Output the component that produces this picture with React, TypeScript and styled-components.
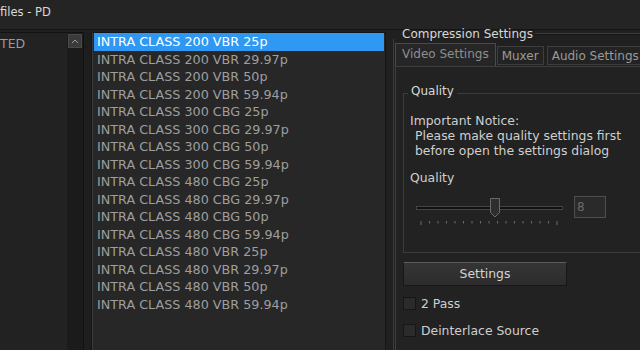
import React from "react";
import styled, { createGlobalStyle } from "styled-components";

const Global = createGlobalStyle`
  html, body { margin: 0; padding: 0; background: #1e1e1e; }
  body { width: 640px; height: 350px; overflow: hidden; font-family: "DejaVu Sans", sans-serif; }
  #root { width: 640px; height: 350px; }
`;

const Window = styled.div`
  width: 640px;
  height: 350px;
  display: flex;
  flex-direction: column;
  background: #202020;
  overflow: hidden;
`;

const TitleBar = styled.div`
  height: 29px;
  flex: none;
  background: #242424;
  border-bottom: 1px solid #151515;
  color: #d8d8d8;
  font-size: 11.5px;
  line-height: 25px;
  white-space: nowrap;
`;

const Body = styled.div`
  flex: 1;
  display: flex;
  padding-top: 2px;
  min-height: 0;
`;

const LeftList = styled.div`
  width: 83px;
  flex: none;
  display: flex;
  border-top: 1px solid #121212;
  border-right: 1px solid #121212;
  background: #222;
`;

const LeftItems = styled.div`
  flex: 1;
  color: #9a9a9a;
  font-size: 12.5px;
  line-height: 18px;
  padding-top: 2px;
  white-space: nowrap;
`;

const ScrollTrack = styled.div`
  width: 16px;
  flex: none;
  background: #1b1b1b;
  display: flex;
  flex-direction: column;
  align-items: center;
  padding-top: 1px;
`;

const ScrollBtn = styled.div`
  width: 14px;
  height: 14px;
  background: #3a3a3a;
  border: 1px solid #4a4a4a;
  box-sizing: border-box;
  display: flex;
  align-items: center;
  justify-content: center;
`;

const Spacer = styled.div`
  width: 7px;
  flex: none;
  background: #1e1e1e;
  border-right: 1px solid #151515;
`;

const PresetList = styled.div`
  width: 290px;
  flex: none;
  background: #272727;
  border-top: 1px solid #151515;
  border-right: 1px solid #151515;
  border-left: 1px solid #3a3a3a;
  padding: 0 1px 0 1px;
`;

const PresetItem = styled.div<{ $selected?: boolean }>`
  height: 17.5px;
  line-height: 17.5px;
  padding-left: 3px;
  font-size: 12.75px;
  white-space: nowrap;
  color: ${(p) => (p.$selected ? "#ffffff" : "#9e9e9e")};
  background: ${(p) => (p.$selected ? "#2f98f2" : "transparent")};
`;

const RightPane = styled.div`
  flex: 1;
  padding-left: 7px;
  display: flex;
  flex-direction: column;
  min-width: 0;
`;

const GroupTitleRow = styled.div`
  display: flex;
  align-items: center;
  height: 10px;
  margin-top: -3px;
`;

const GroupTitle = styled.span`
  color: #d8d8d8;
  font-size: 12px;
  padding: 0 2px 0 9px;
  white-space: nowrap;
`;

const GroupLine = styled.div`
  flex: 1;
  height: 0;
  border-top: 1px solid #3c3c3c;
  border-bottom: 1px solid #141414;
`;

const GroupBody = styled.div`
  flex: 1;
  border-left: 1px solid #3c3c3c;
  display: flex;
  flex-direction: column;
  padding-top: 4px;
  min-width: 0;
`;

const TabStrip = styled.div`
  display: flex;
  align-items: flex-end;
  height: 23px;
  padding-left: 1px;
  overflow: hidden;
`;

const Tab = styled.div<{ $active?: boolean }>`
  flex: none;
  height: ${(p) => (p.$active ? "23px" : "19px")};
  line-height: ${(p) => (p.$active ? "21px" : "18px")};
  padding: 0 ${(p) => (p.$active ? "6px" : "4px")};
  margin-right: ${(p) => (p.$active ? "1px" : "3px")};
  margin-bottom: ${(p) => (p.$active ? "0" : "1px")};
  box-sizing: border-box;
  font-size: 12px;
  color: ${(p) => (p.$active ? "#8e8e8e" : "#9a9a9a")};
  background: ${(p) => (p.$active ? "#262626" : "#232323")};
  border: 1px solid ${(p) => (p.$active ? "#4a4a4a" : "#3e3e3e")};
  border-bottom: ${(p) => (p.$active ? "none" : "1px solid #3e3e3e")};
  white-space: nowrap;
`;

const TabPanel = styled.div`
  flex: 1;
  border-top: 1px solid #3e3e3e;
  border-left: 1px solid #3e3e3e;
  margin-left: 1px;
  background: #222;
  padding: 26px 0 0 7px;
  display: flex;
  flex-direction: column;
`;

const QualityGroup = styled.div`
  border-top: 1px solid #3c3c3c;
  border-left: 1px solid #3c3c3c;
  border-bottom: 1px solid #3c3c3c;
  height: 160px;
  box-sizing: border-box;
  padding: 19px 0 0 6px;
  position: relative;
`;

const QualityLegend = styled.span`
  position: absolute;
  top: -10px;
  left: 4px;
  padding: 0 3px;
  background: #222;
  color: #d8d8d8;
  font-size: 12px;
`;

const Notice = styled.div`
  color: #cfcfcf;
  font-size: 12.4px;
  line-height: 15px;
  white-space: nowrap;
`;

const NoticeBody = styled.div`
  padding-left: 5px;
`;

const FieldLabel = styled.div`
  color: #cfcfcf;
  font-size: 12.4px;
  margin-top: 12px;
`;

const SliderRow = styled.div`
  display: flex;
  align-items: flex-start;
  margin-top: 12px;
`;

const SliderBox = styled.div`
  width: 152px;
  margin-left: 6px;
`;

const NumBox = styled.div`
  width: 32px;
  height: 22px;
  box-sizing: border-box;
  margin-left: 6px;
  margin-top: -1px;
  border: 1px solid #4e4e4e;
  background: #2a2a2a;
  color: #6a6a6a;
  font-size: 12px;
  line-height: 20px;
  padding-left: 2px;
`;

const SettingsButton = styled.div`
  width: 164px;
  height: 24px;
  margin-top: 9px;
  box-sizing: border-box;
  border: 1px solid #171717;
  border-top: 1px solid #5a5a5a;
  background: linear-gradient(#353535, #2c2c2c);
  color: #d4d4d4;
  font-size: 12.4px;
  line-height: 22px;
  text-align: center;
`;

const CheckRow = styled.div<{ $gap: number }>`
  display: flex;
  align-items: center;
  margin-top: ${(p) => p.$gap}px;
  gap: 5px;
  color: #cfcfcf;
  font-size: 12.4px;
`;

const CheckBox = styled.div`
  width: 13px;
  height: 13px;
  box-sizing: border-box;
  border: 1px solid #161616;
  background: #2b2b2b;
`;

const presets = [
  "INTRA CLASS 200 VBR 25p",
  "INTRA CLASS 200 VBR 29.97p",
  "INTRA CLASS 200 VBR 50p",
  "INTRA CLASS 200 VBR 59.94p",
  "INTRA CLASS 300 CBG 25p",
  "INTRA CLASS 300 CBG 29.97p",
  "INTRA CLASS 300 CBG 50p",
  "INTRA CLASS 300 CBG 59.94p",
  "INTRA CLASS 480 CBG 25p",
  "INTRA CLASS 480 CBG 29.97p",
  "INTRA CLASS 480 CBG 50p",
  "INTRA CLASS 480 CBG 59.94p",
  "INTRA CLASS 480 VBR 25p",
  "INTRA CLASS 480 VBR 29.97p",
  "INTRA CLASS 480 VBR 50p",
  "INTRA CLASS 480 VBR 59.94p",
];

const Slider = () => {
  const ticks = Array.from({ length: 17 }, (_, i) => 5 + i * 8.5);
  return (
    <svg width="152" height="30" viewBox="0 0 152 30">
      <rect x="0.5" y="9.5" width="146" height="3" fill="#111" stroke="#444" />
      <path d="M74.5 1.5 h9 v14 l-4.5 4.5 l-4.5 -4.5 z" fill="#2e2e2e" stroke="#6a6a6a" />
      {ticks.map((x, i) => (
        <line key={i} x1={x} x2={x} y1={24} y2={i === 0 || i === 16 ? 28 : 26.5} stroke="#6a6a6a" />
      ))}
    </svg>
  );
};

export default function App() {
  return (
    <>
      <Global />
      <Window>
        <TitleBar>files - PD</TitleBar>
        <Body>
          <LeftList>
            <LeftItems>TED</LeftItems>
            <ScrollTrack>
              <ScrollBtn>
                <svg width="8" height="5" viewBox="0 0 8 5">
                  <path d="M1 4 L4 1 L7 4" fill="none" stroke="#9a9a9a" strokeWidth="1" />
                </svg>
              </ScrollBtn>
            </ScrollTrack>
          </LeftList>
          <Spacer />
          <PresetList>
            {presets.map((p, i) => (
              <PresetItem key={p} $selected={i === 0}>
                {p}
              </PresetItem>
            ))}
          </PresetList>
          <RightPane>
            <GroupTitleRow>
              <GroupTitle>Compression Settings</GroupTitle>
              <GroupLine />
            </GroupTitleRow>
            <GroupBody>
              <TabStrip>
                <Tab $active>Video Settings</Tab>
                <Tab>Muxer</Tab>
                <Tab>Audio Settings</Tab>
              </TabStrip>
              <TabPanel>
                <QualityGroup>
                  <QualityLegend>Quality</QualityLegend>
                  <Notice>
                    Important Notice:
                    <NoticeBody>
                      Please make quality settings first
                      <br />
                      before open the settings dialog
                    </NoticeBody>
                  </Notice>
                  <FieldLabel>Quality</FieldLabel>
                  <SliderRow>
                    <SliderBox>
                      <Slider />
                    </SliderBox>
                    <NumBox>8</NumBox>
                  </SliderRow>
                </QualityGroup>
                <SettingsButton>Settings</SettingsButton>
                <CheckRow $gap={10}>
                  <CheckBox />
                  2 Pass
                </CheckRow>
                <CheckRow $gap={12}>
                  <CheckBox />
                  Deinterlace Source
                </CheckRow>
              </TabPanel>
            </GroupBody>
          </RightPane>
        </Body>
      </Window>
    </>
  );
}
